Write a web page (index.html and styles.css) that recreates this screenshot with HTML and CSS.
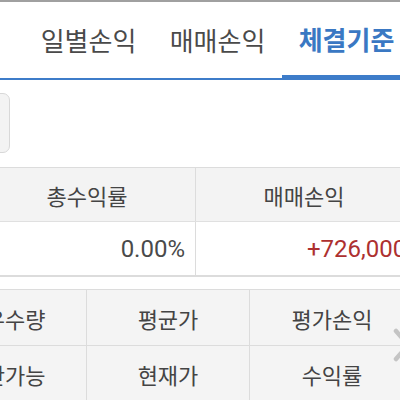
FILE: index.html
```html
<!DOCTYPE html>
<html lang="ko">
<head>
<meta charset="utf-8">
<link rel="stylesheet" href="styles.css">
</head>
<body>
<div class="page">
  <div class="tabs">
    <div class="tab">일별손익</div>
    <div class="tab">매매손익</div>
    <div class="tab active">체결기준</div>
  </div>
  <div class="filter">
    <div class="box"></div>
  </div>
  <div class="summary">
    <div class="row head">
      <div class="cell c1">총수익률</div>
      <div class="cell c2">매매손익</div>
    </div>
    <div class="row data">
      <div class="cell c1 num">0.00%</div>
      <div class="cell c2 num red">+726,000</div>
    </div>
  </div>
  <div class="grid">
    <div class="gcell">보유수량</div>
    <div class="gcell">평균가</div>
    <div class="gcell">평가손익</div>
    <div class="gcell">청산가능</div>
    <div class="gcell">현재가</div>
    <div class="gcell">수익률</div>
  </div>
  <svg class="chev" width="20" height="34" viewBox="0 0 20 34"><path d="M3 3 L15 17 L3 31" fill="none" stroke="#c4c4c4" stroke-width="4.5" stroke-linecap="round" stroke-linejoin="round"/></svg>
</div>
</body>
</html>
```
FILE: styles.css
```css
html, body { margin: 0; padding: 0; }
body { width: 400px; height: 400px; overflow: hidden; background: #fff; font-family: "Noto Sans CJK KR", "Noto Sans", sans-serif; color: #444; }
.page { position: relative; width: 400px; height: 400px; overflow: hidden; }
.tabs { display: flex; border-top: 2px solid #a0a0a0; border-bottom: 2px solid #3d7cc9; box-sizing: border-box; height: 80px; padding-left: 24px; width: 600px; }
.tab { width: 129px; flex: none; text-align: center; font-size: 26px; line-height: 76px; color: #4a4a4a; box-sizing: border-box; }
.tab.active { color: #3a78c3; font-weight: 700; border-bottom: 3px solid #3d7cc9; line-height: 73px; }
.filter { height: 87px; display: flex; align-items: flex-start; }
.box { margin-top: 13px; margin-left: -20px; width: 28px; height: 58px; background: #f3f3f3; border: 1px solid #d8d8d8; border-radius: 7px; }
.summary { width: 460px; margin-left: -21px; border-top: 1px solid #dcdcdc; border-bottom: 2px solid #dcdcdc; }
.row { display: flex; height: 53px; }
.row.head { background: #f3f3f3; border-bottom: 1px solid #e0e0e0; }
.cell { flex: none; display: flex; align-items: center; justify-content: center; font-size: 22px; color: #444; box-sizing: border-box; }
.cell.c1 { width: 217px; border-right: 1px solid #dcdcdc; }
.cell.c2 { width: 216px; }
.cell.num { font-family: "Roboto", "Noto Sans", sans-serif; font-size: 24px; color: #4a4a4a; }
.cell.c1.num { justify-content: flex-end; padding-right: 10px; }
.cell.c2.num { justify-content: flex-start; padding-left: 111px; width: 260px; }
.red { color: #ad3030 !important; }
.grid { margin-top: 12px; margin-left: -76px; width: 493px; display: grid; grid-template-columns: 163px 163px 165px; border-top: 1px solid #dcdcdc; }
.gcell { height: 55px; background: #f4f4f4; border-right: 1px solid #dcdcdc; border-bottom: 1px solid #dcdcdc; display: flex; align-items: center; justify-content: center; font-size: 22px; color: #444; }
.chev { position: absolute; left: 393px; top: 328px; }
```
